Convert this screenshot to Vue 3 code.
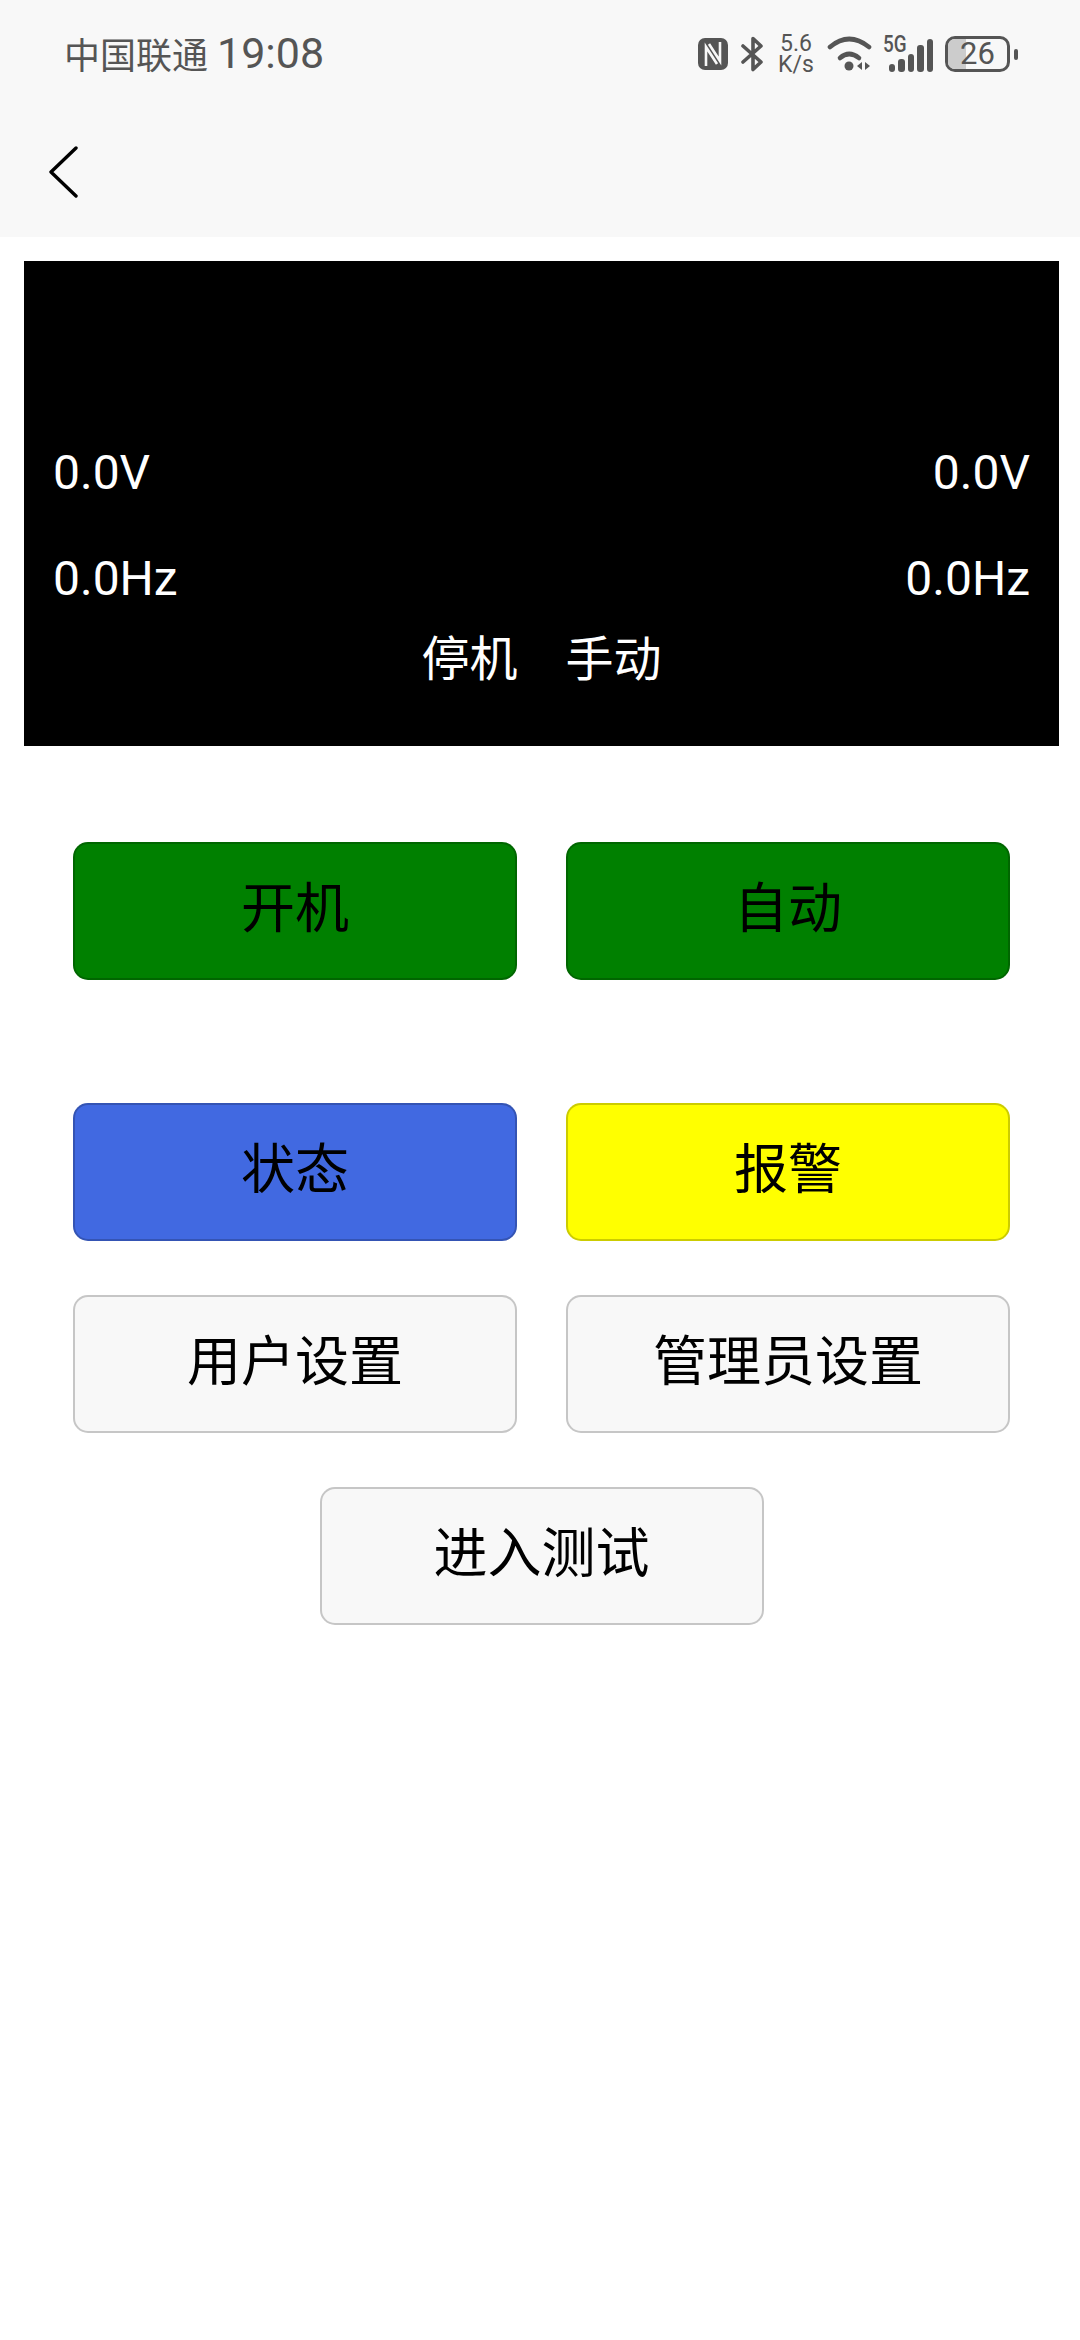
<template>
  <div class="page">
    <div class="status-bar">
      <div class="status-left">
        <span class="carrier">中国联通</span>
        <span class="time">19:08</span>
      </div>
      <div class="status-right">
        <svg class="ic-nfc" width="30" height="34" viewBox="0 0 30 34">
          <rect x="0" y="1" width="30" height="32" rx="7" fill="#555" />
          <path d="M8 29V10l11 17" fill="none" stroke="#f8f8f8" stroke-width="2.6" />
          <path d="M22 5v19L11 7" fill="none" stroke="#f8f8f8" stroke-width="2.6" />
        </svg>
        <svg class="ic-bt" width="22" height="36" viewBox="0 0 22 36">
          <path d="M2 10l18 16-8 7.500V2.500l8 7.500L2 26" fill="none" stroke="#555" stroke-width="3.6" stroke-linejoin="round" stroke-linecap="round" />
        </svg>
        <div class="speed"><span>5.6</span><span>K/s</span></div>
        <svg class="ic-wifi" width="45" height="36" viewBox="0 0 45 36">
          <path d="M3 11Q22-5 42 11" fill="none" stroke="#555" stroke-width="4.6" stroke-linecap="round" />
          <path d="M13 22q9-8 19 0" fill="none" stroke="#555" stroke-width="4.6" stroke-linecap="round" />
          <circle cx="22" cy="30" r="4.500" fill="#555" />
          <path d="M35 26v8l-5-4zM38 26v8l5-4z" fill="#555" />
        </svg>
        <div class="signal">
          <span class="net">5G</span>
          <div class="bars">
            <i v-for="h in bars" :key="h" :style="{ height: h + 'px' }"></i>
          </div>
        </div>
        <div class="battery">
          <div class="battery-body">
            <div class="battery-level"></div>
            <span>26</span>
          </div>
          <div class="battery-tip"></div>
        </div>
      </div>
    </div>

    <div class="nav-bar">
      <svg width="30" height="52" viewBox="0 0 30 52">
        <path d="M27 2L2 26l25 24" fill="none" stroke="#000" stroke-width="3.400" stroke-linecap="round" stroke-linejoin="round" />
      </svg>
    </div>

    <div class="panel">
      <div class="panel-row">
        <span>0.0V</span>
        <span>0.0V</span>
      </div>
      <div class="panel-row">
        <span>0.0Hz</span>
        <span>0.0Hz</span>
      </div>
      <div class="panel-state">
        <span>停机</span>
        <span>手动</span>
      </div>
    </div>

    <div class="actions">
      <div class="btn-row first">
        <button class="btn green">开机</button>
        <button class="btn green">自动</button>
      </div>
      <div class="btn-row">
        <button class="btn blue">状态</button>
        <button class="btn yellow">报警</button>
      </div>
      <div class="btn-row">
        <button class="btn">用户设置</button>
        <button class="btn">管理员设置</button>
      </div>
      <div class="btn-row single">
        <button class="btn">进入测试</button>
      </div>
    </div>
  </div>
</template>

<script setup>
const bars = [8, 13, 18, 27, 33]
</script>

<style>
html,
body {
  margin: 0;
  background: #fff;
}
</style>

<style scoped>
.page {
  width: 1080px;
  height: 2340px;
  background: #fff;
  font-family: Roboto, "Noto Sans CJK SC", sans-serif;
  overflow: hidden;
}

.status-bar {
  height: 108px;
  box-sizing: border-box;
  padding: 0 62px 0 64px;
  background: #f8f8f8;
  display: flex;
  align-items: center;
  justify-content: space-between;
  color: #555;
}

.status-left {
  display: flex;
  align-items: center;
  gap: 9px;
  padding-bottom: 2px;
}

.carrier {
  font-size: 36px;
}

.time {
  font-size: 43px;
}

.status-right {
  display: flex;
  align-items: center;
}

.ic-nfc {
  margin-right: 13px;
}

.ic-bt {
  margin-right: 15px;
}

.speed {
  width: 36px;
  display: flex;
  flex-direction: column;
  align-items: center;
  font-size: 23px;
  line-height: 21px;
  margin-right: 13px;
}

.ic-wifi {
  margin-right: 11px;
}

.signal {
  position: relative;
  width: 50px;
  height: 36px;
  margin-right: 12px;
}

.net {
  position: absolute;
  left: 0;
  top: -1px;
  font-size: 23px;
  line-height: 20px;
  font-weight: 500;
  transform: scaleX(0.82);
  transform-origin: left center;
}

.bars {
  position: absolute;
  right: 0;
  bottom: 0;
  display: flex;
  align-items: flex-end;
  gap: 3px;
}

.bars i {
  display: block;
  width: 6.500px;
  background: #555;
  border-radius: 3px;
}

.battery {
  display: flex;
  align-items: center;
  gap: 4px;
}

.battery-body {
  position: relative;
  width: 65px;
  height: 36px;
  box-sizing: border-box;
  border: 3px solid #555;
  border-radius: 10px;
  display: flex;
  align-items: center;
  justify-content: center;
  overflow: hidden;
}

.battery-level {
  position: absolute;
  left: 0;
  top: 0;
  bottom: 0;
  width: 18px;
  background: #ccc;
}

.battery-body span {
  position: relative;
  font-size: 31px;
  line-height: 30px;
}

.battery-tip {
  width: 4px;
  height: 11px;
  background: #555;
  border-radius: 2px;
}

.nav-bar {
  height: 129px;
  box-sizing: border-box;
  padding: 38px 0 0 49px;
  background: #f8f8f8;
  display: flex;
  align-items: flex-start;
}

.panel {
  margin: 24px 21px 0 24px;
  height: 485px;
  box-sizing: border-box;
  padding: 185px 29px 0;
  background: #000;
  color: #fff;
  font-size: 48px;
}

.panel-row {
  display: flex;
  justify-content: space-between;
  height: 54px;
  line-height: 54px;
  margin-bottom: 52px;
}

.panel-state {
  display: flex;
  justify-content: center;
  gap: 48px;
  margin-top: -28px;
  line-height: 60px;
}

.actions {
  padding: 96px 70px 0 73px;
}

.btn-row {
  display: flex;
  justify-content: space-between;
  margin-bottom: 54px;
}

.btn-row.first {
  margin-bottom: 123px;
}

.btn-row.single {
  justify-content: center;
}

.btn {
  width: 444px;
  height: 138px;
  box-sizing: border-box;
  border: 2px solid rgba(0, 0, 0, 0.2);
  border-radius: 15px;
  background: #f8f8f8;
  color: #000;
  font-family: inherit;
  font-size: 54px;
  padding: 0 0 13px;
}

.btn.green {
  background: #008000;
}

.btn.blue {
  background: #4169e1;
}

.btn.yellow {
  background: #ffff00;
}
</style>
